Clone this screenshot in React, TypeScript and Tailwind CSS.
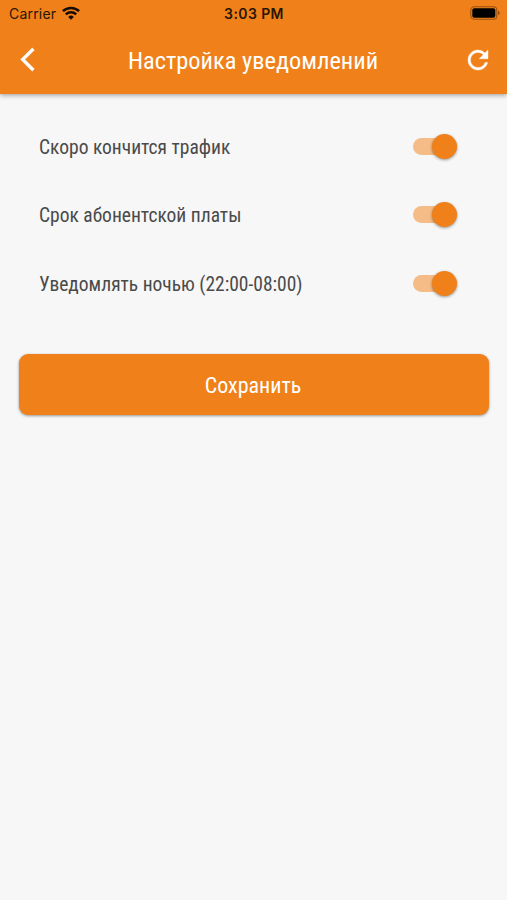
import { useState } from "react";

type Setting = {
  id: string;
  label: string;
  enabled: boolean;
};

const INITIAL_SETTINGS: Setting[] = [
  { id: "traffic", label: "Скоро кончится трафик", enabled: true },
  { id: "fee", label: "Срок абонентской платы", enabled: true },
  { id: "night", label: "Уведомлять ночью (22:00-08:00)", enabled: true },
];

function StatusBar() {
  return (
    <div className="grid h-[27px] grid-cols-3 items-center pl-[9px] pr-[7px] font-['Inter',sans-serif] text-[14px] text-[#2b1503]">
      <div className="flex items-center gap-[6px]">
        <span className="tracking-[0.2px]">Carrier</span>
        <svg viewBox="0 0 18 14" className="mb-[2px] h-[14px] w-[18px]" fill="none" stroke="#1a0c00" strokeWidth="2.5">
          <path d="M0.9 5.2a11.6 11.6 0 0 1 16.2 0" />
          <path d="M3.8 8.4a7.5 7.5 0 0 1 10.4 0" />
          <path d="M9 13.8 6.2 10.9a4.1 4.1 0 0 1 5.6 0z" fill="#1a0c00" stroke="none" />
        </svg>
      </div>
      <span className="pr-px text-center font-semibold tracking-[0.4px]">3:03 PM</span>
      <svg viewBox="0 0 30 14" className="mb-[1px] h-[14px] w-[30px] justify-self-end">
        <rect x="0.8" y="0.8" width="26" height="12.4" rx="3.4" fill="none" stroke="#98500f" strokeWidth="1.1" />
        <rect x="2.3" y="2.3" width="23" height="9.4" rx="2" fill="#000" />
        <path d="M28 4.8v4.4c1.1-.4 1.7-1.2 1.7-2.2S29.1 5.2 28 4.8z" fill="#98500f" />
      </svg>
    </div>
  );
}

function Toggle({ checked, onChange }: { checked: boolean; onChange: () => void }) {
  return (
    <button
      type="button"
      role="switch"
      aria-checked={checked}
      onClick={onChange}
      className={`flex h-[17px] w-[44px] items-center rounded-full ${
        checked ? "justify-end bg-[#f5bc87]" : "justify-start bg-[#c4c4c4]"
      }`}
    >
      <span
        className={`h-[25px] w-[25px] rounded-full shadow-[0_1px_3px_rgba(0,0,0,0.4)] ${
          checked ? "bg-[#f0811a]" : "bg-white"
        }`}
      />
    </button>
  );
}

export default function App() {
  const [settings, setSettings] = useState(INITIAL_SETTINGS);

  const toggle = (id: string) => {
    setSettings((prev) => prev.map((s) => (s.id === id ? { ...s, enabled: !s.enabled } : s)));
  };

  return (
    <div className="min-h-screen bg-[#f7f7f7] font-['Roboto',sans-serif] [font-stretch:75%]">
      <header className="h-[94px] bg-[#f0811a] shadow-[0_1px_5px_rgba(0,0,0,0.4)]">
        <StatusBar />
        <div className="grid h-[66px] grid-cols-[40px_1fr_40px] items-center pl-[20px] pr-[14px] text-white">
          <button type="button" aria-label="Назад" className="pb-px">
            <svg viewBox="-0.6 1.5 12.9 21" className="h-[25px] w-[15px]" fill="currentColor" stroke="currentColor" strokeWidth="0.6">
              <path d="M11.67 3.87 9.9 2.1 0 12l9.9 9.9 1.77-1.77L3.54 12z" />
            </svg>
          </button>
          <h1 className="whitespace-nowrap pr-[7px] pt-[3px] text-center text-[24.4px]">Настройка уведомлений</h1>
          <button type="button" aria-label="Обновить" className="justify-self-end pb-px">
            <svg viewBox="0 0 24 24" className="h-[30px] w-[30px]" fill="currentColor" stroke="currentColor" strokeWidth="0.3">
              <path d="M17.65 6.35A7.958 7.958 0 0 0 12 4c-4.42 0-7.99 3.58-7.99 8s3.57 8 7.99 8c3.73 0 6.84-2.55 7.73-6h-2.08A5.990 5.990 0 0 1 12 18c-3.310 0-6-2.690-6-6s2.690-6 6-6c1.660 0 3.140.690 4.220 1.780L13 11h7V4l-2.350 2.350z" />
            </svg>
          </button>
        </div>
      </header>

      <main className="pl-[19px] pr-[18px] pt-[18px]">
        <ul className="pl-[20px] pr-[32px]">
          {settings.map((s) => (
            <li key={s.id} className="flex h-[68.5px] items-center justify-between">
              <span className="whitespace-nowrap pt-[2px] text-[19.5px] text-[#4a4a4a]">{s.label}</span>
              <Toggle checked={s.enabled} onChange={() => toggle(s.id)} />
            </li>
          ))}
        </ul>

        <button
          type="button"
          className="mt-[36px] h-[61px] w-full rounded-[9px] bg-[#f0811a] pr-[2px] pt-[2px] text-[22px] text-white shadow-[0_1px_3px_rgba(0,0,0,0.4)]"
        >
          Сохранить
        </button>
      </main>
    </div>
  );
}
